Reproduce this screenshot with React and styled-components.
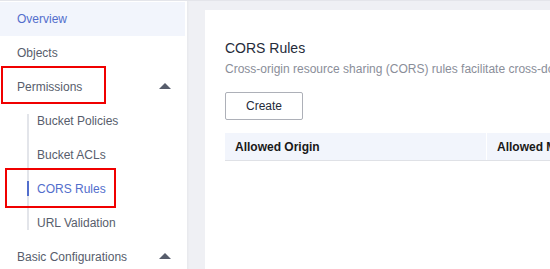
import React from 'react'
import styled, { createGlobalStyle } from 'styled-components'

const GlobalStyle = createGlobalStyle`
    html, body {
        margin: 0;
        padding: 0;
        overflow: hidden;
    }
    body {
        font-family: Arial, "Liberation Sans", sans-serif;
        font-size: 12px;
    }
`

const menu = [
    { label: 'Overview', selected: true },
    { label: 'Objects' },
    { label: 'Permissions', arrow: true, marked: true },
    { label: 'Bucket Policies', sub: true },
    { label: 'Bucket ACLs', sub: true },
    { label: 'CORS Rules', sub: true, active: true, marked: true },
    { label: 'URL Validation', sub: true },
    { label: 'Basic Configurations', arrow: true },
]

function App() {
    const top = menu.slice(0, 3)
    const subs = menu.slice(3, 7)
    const rest = menu.slice(7)
    const renderItem = (item) => (
        <Item key={item.label} selected={item.selected} sub={item.sub} active={item.active}>
            {item.active && <Indicator />}
            <span>{item.label}</span>
            {item.arrow && <Arrow />}
            {item.marked && <Mark sub={item.sub} />}
        </Item>
    )
    return (
        <Page>
            <GlobalStyle />
            <Sidebar>
                {top.map(renderItem)}
                <SubGroup>{subs.map(renderItem)}</SubGroup>
                {rest.map(renderItem)}
            </Sidebar>
            <Main>
                <Card>
                    <Title>CORS Rules</Title>
                    <Desc>Cross-origin resource sharing (CORS) rules facilitate cross-domain access to resources in buckets.</Desc>
                    <Button>Create</Button>
                    <Table>
                        <HeadCell width={262}>Allowed Origin</HeadCell>
                        <HeadCell width={200}>Allowed Methods</HeadCell>
                    </Table>
                </Card>
            </Main>
        </Page>
    )
}

export default App

const Page = styled.div`
    display: flex;
    width: 550px;
    height: 269px;
    border-top: 1px solid #e4e5ea;
    background: #eff0f4;
    overflow: hidden;
`

const Sidebar = styled.div`
    width: 185px;
    flex-shrink: 0;
    padding-top: 1px;
    background: #fff;
    border-right: 2px solid #fff;
    box-shadow: 1px 0 2px rgba(0, 0, 0, 0.04);
`

const SubGroup = styled.div`
    position: relative;

    &::before {
        content: '';
        position: absolute;
        left: 27px;
        top: 10px;
        bottom: 10px;
        width: 2px;
        background: #e3e5ea;
    }
`

const Item = styled.div`
    position: relative;
    height: 34px;
    display: flex;
    align-items: center;
    padding-left: ${p => p.sub ? '37px' : '17px'};
    padding-right: 13px;
    color: ${p => (p.selected || p.active) ? '#526ecc' : '#575d6c'};
    background: ${p => p.selected ? '#f2f5fc' : 'transparent'};

    span {
        flex: 1;
    }
`

const Indicator = styled.div`
    position: absolute;
    left: 27px;
    top: 9px;
    width: 2px;
    height: 15px;
    background: #526ecc;
    z-index: 1;
`

const Arrow = styled.div`
    width: 0;
    height: 0;
    border-left: 6px solid transparent;
    border-right: 6px solid transparent;
    border-bottom: 6px solid #575d6c;
    margin-right: 1px;
    margin-bottom: 2px;
`

const Mark = styled.div`
    position: absolute;
    left: ${p => p.sub ? '5px' : '1px'};
    top: -4px;
    width: ${p => p.sub ? '107px' : '101px'};
    height: ${p => p.sub ? '36px' : '34px'};
    border: 2px solid #f00000;
    pointer-events: none;
`

const Main = styled.div`
    flex: 1;
    padding: 9px 0 0 18px;
    min-width: 0;
`

const Card = styled.div`
    background: #fff;
    height: 100%;
    padding: 28px 0 0 20px;
    box-sizing: border-box;
`

const Title = styled.div`
    font-size: 14px;
    line-height: 20px;
    color: #252b3a;
`

const Desc = styled.div`
    margin-top: 2px;
    line-height: 18px;
    color: #8a8e99;
    white-space: nowrap;
`

const Button = styled.button`
    margin-top: 14px;
    width: 78px;
    height: 28px;
    border: 1px solid #adb0b8;
    border-radius: 2px;
    background: #fff;
    color: #252b3a;
    font-family: inherit;
    font-size: 12px;
    padding: 0;
`

const Table = styled.div`
    margin-top: 13px;
    display: flex;
    height: 28px;
    background: #f2f5fc;
    border-bottom: 1px solid #dfe1e6;
    box-sizing: border-box;
`

const HeadCell = styled.div`
    flex: 0 0 ${p => p.width}px;
    display: flex;
    align-items: center;
    padding-left: 10px;
    box-sizing: border-box;
    font-weight: bold;
    color: #191919;
    white-space: nowrap;
    border-right: 1px solid #fff;
`
